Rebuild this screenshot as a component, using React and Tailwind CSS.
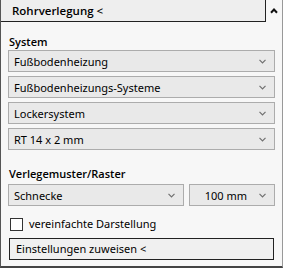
import React from "react";

const font = { fontFamily: '"Noto Sans", "Open Sans", sans-serif' };
const labelFont = { fontFamily: '"Open Sans", "Noto Sans", sans-serif' };

function Chevron() {
  return (
    <svg width="7" height="5" viewBox="0 0 7 5" className="shrink-0">
      <polyline points="0.5,0.8 3.5,3.8 6.5,0.8" fill="none" stroke="#707070" strokeWidth="1.2" />
    </svg>
  );
}

function Select({ children, className = "", center = false }) {
  return (
    <div
      className={
        "h-[22px] flex items-center border border-[#acacac] bg-[#e9e9e9] text-[11px] text-black pr-[8px] pl-[5px] " +
        className
      }
    >
      <span className={center ? "flex-1 text-right pr-[12px] leading-none" : "flex-1 leading-none"}>{children}</span>
      <Chevron />
    </div>
  );
}

export default function App() {
  return (
    <div
      style={font}
      className="w-[283px] h-[268px] bg-[#f7f7f7] border-l border-r border-b-2 border-l-[#555] border-r-[#999] border-b-[#444] flex flex-col"
    >
      <div className="flex h-[22px] shrink-0">
        <div
          style={labelFont}
          className="flex-1 bg-[#eeeeee] border-b border-r border-[#222] flex items-center pl-[11px] text-[11.5px] font-semibold text-black"
        >
          Rohrverlegung &lt;
        </div>
        <div className="w-[16px] flex items-center justify-center">
          <svg width="8" height="6" viewBox="0 0 8 6">
            <polyline points="1,4.7 4,1.5 7,4.7" fill="none" stroke="#111" strokeWidth="2" />
          </svg>
        </div>
      </div>
      <div className="flex flex-col px-[7px]">
        <div
          style={labelFont}
          className="mt-[12px] h-[16px] flex items-center text-[11px] font-semibold text-black pl-[1px]"
        >
          System
        </div>
        <div className="flex flex-col gap-[4px]">
          <Select>Fußbodenheizung</Select>
          <Select>Fußbodenheizungs-Systeme</Select>
          <Select>Lockersystem</Select>
          <Select>RT 14 x 2 mm</Select>
        </div>
        <div
          style={labelFont}
          className="mt-[16px] h-[16px] flex items-center text-[11px] font-semibold text-black pl-[1px]"
        >
          Verlegemuster/Raster
        </div>
        <div className="mt-[2px] flex gap-[5px]">
          <Select className="w-[176px]">Schnecke</Select>
          <Select className="flex-1" center>100 mm</Select>
        </div>
        <div className="mt-[10px] h-[16px] flex items-center gap-[6px] pl-[2px]">
          <div className="w-[13px] h-[13px] border border-[#333] bg-white shrink-0" />
          <span className="text-[11px] text-black">vereinfachte Darstellung</span>
        </div>
        <div className="mt-[6px] ml-[1px] mr-[1px] h-[22px] border border-[#222] bg-[#f0f0f0] flex items-center pl-[6px] text-[11px] text-black">
          Einstellungen zuweisen &lt;
        </div>
      </div>
    </div>
  );
}
